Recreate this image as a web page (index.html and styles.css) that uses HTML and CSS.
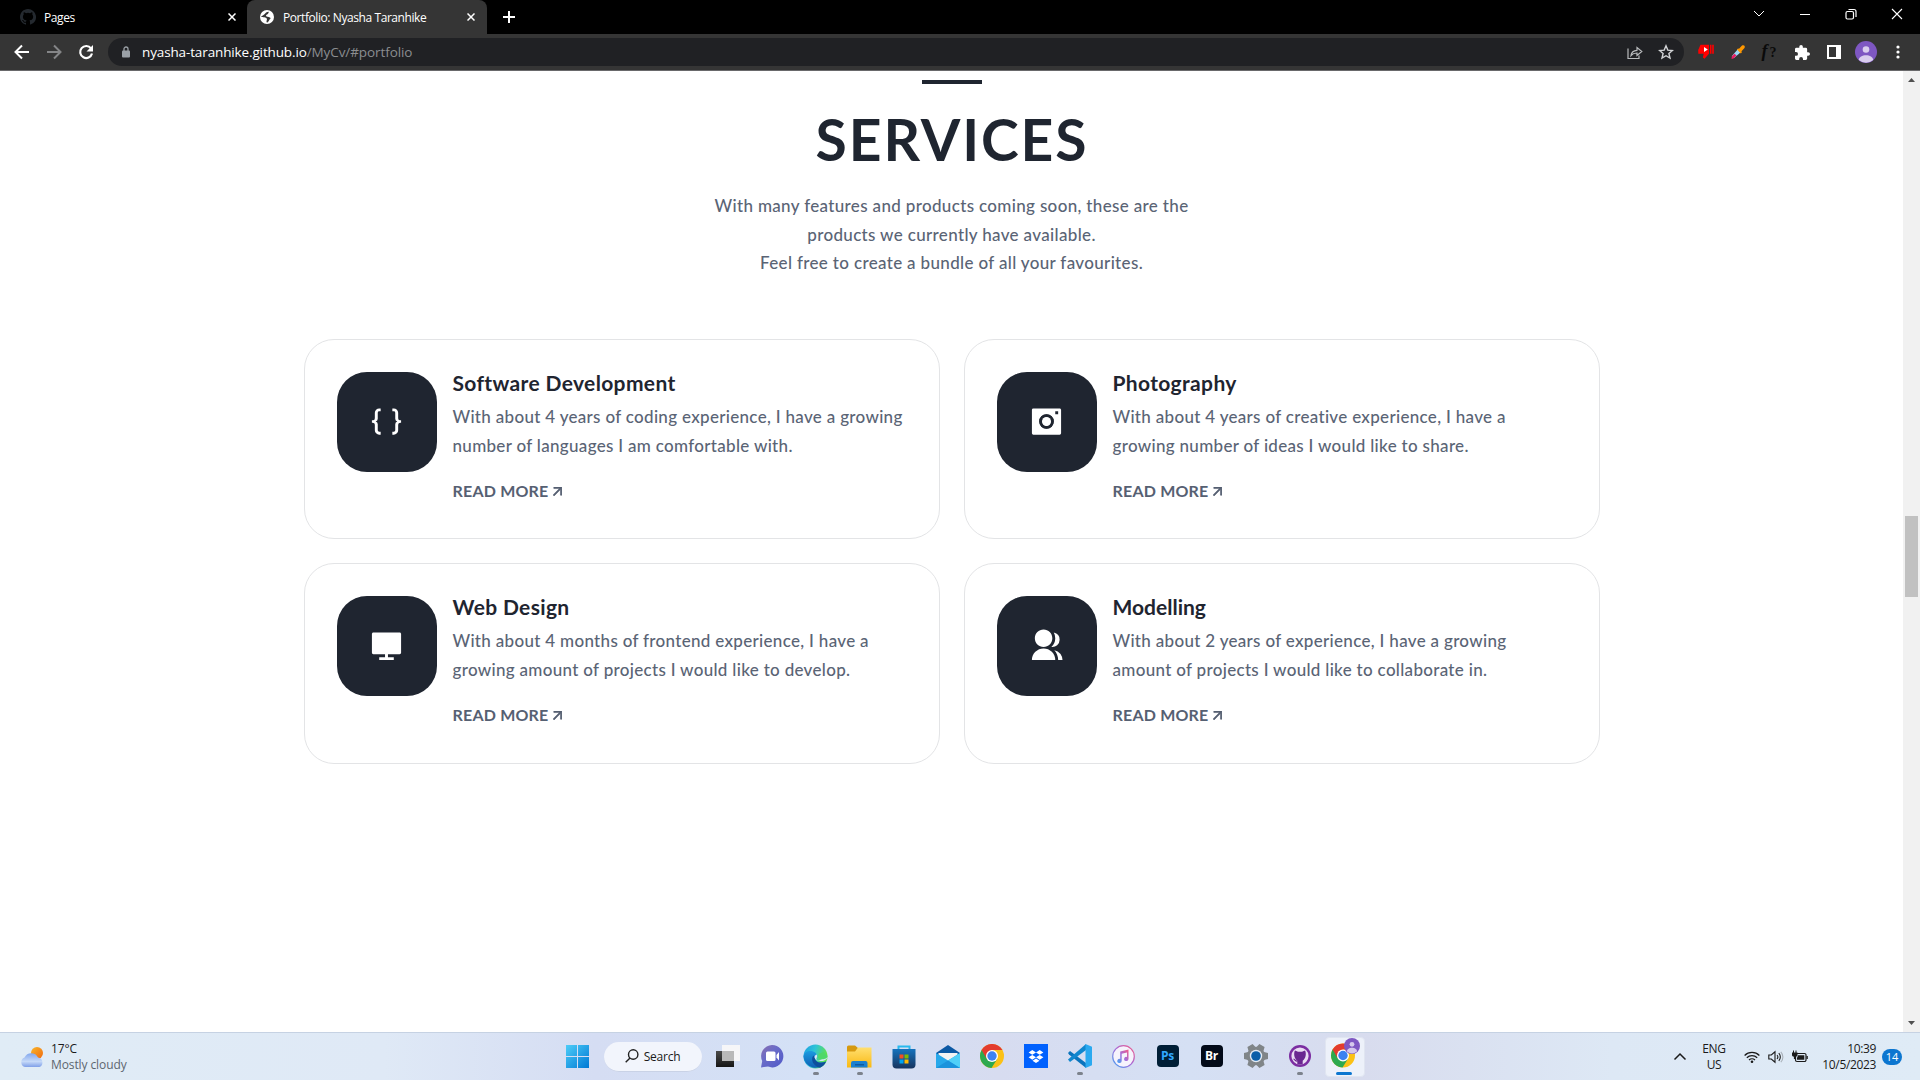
FILE: index.html
```html
<!DOCTYPE html>
<html lang="en">
<head>
<meta charset="utf-8">
<title>Portfolio: Nyasha Taranhike</title>
<link rel="stylesheet" href="styles.css">
</head>
<body>
<header class="tabs">
  <div class="tab">
    <svg class="fav" viewBox="0 0 16 16" fill="#24292f"><path d="M8 0C3.580 0 0 3.580 0 8c0 3.540 2.290 6.530 5.470 7.590.4.070.550-.170.550-.380v-1.490c-2.010.370-2.530-.490-2.690-.940-.090-.230-.480-.940-.820-1.130-.280-.150-.680-.520-.010-.530.630-.010 1.080.580 1.230.820.720 1.210 1.870.870 2.330.660.070-.520.280-.870.510-1.070-1.780-.2-3.640-.890-3.640-3.950 0-.870.310-1.590.820-2.150-.080-.2-.360-1.020.080-2.120 0 0 .670-.210 2.200.820a7.600 7.600 0 0 1 4 0c1.530-1.040 2.200-.820 2.200-.820.440 1.100.160 1.920.080 2.120.510.560.820 1.270.820 2.150 0 3.070-1.870 3.750-3.650 3.950.290.250.540.730.540 1.480v2.200c0 .210.150.460.550.380A8 8 0 0 0 8 0z"/></svg>
    <span class="tab-title">Pages</span>
    <svg class="x" viewBox="0 0 8 8" stroke="#fff" stroke-width="1.5"><path d="M.5.5l7 7M7.500.5l-7 7"/></svg>
  </div>
  <div class="tab active">
    <svg class="fav" viewBox="0 0 16 16"><circle cx="8" cy="8" r="7" fill="#fff"/><path d="M2 7.500c2 1.500 5 .3 5.800 2.200.6 1.500-1 2 .2 4 2.200-1 1.700-3 3.700-4.500C10 7.200 7.500 8.500 7 6.800c.4-1.700 2.700-1.200 2.700-4C6.500 2.500 6.500 6 2 7.500z" fill="#353535"/></svg>
    <span class="tab-title">Portfolio: Nyasha Taranhike</span>
    <svg class="x" viewBox="0 0 8 8" stroke="#fff" stroke-width="1.5"><path d="M.5.5l7 7M7.500.5l-7 7"/></svg>
  </div>
  <svg class="plus" viewBox="0 0 12 12" stroke="#fff" stroke-width="2"><path d="M6 0v12M0 6h12"/></svg>
  <div class="winctl">
    <svg width="12" height="12" viewBox="0 0 12 12" fill="none" stroke="#fff"><path d="M1 3l5 5 5-5"/></svg>
    <svg width="12" height="12" viewBox="0 0 12 12" stroke="#fff"><path d="M1 6.500h10"/></svg>
    <svg width="12" height="12" viewBox="0 0 12 12" fill="none" stroke="#fff" stroke-width="1.200"><rect x="1" y="3.500" width="7.500" height="7.500" rx="1.500"/><path d="M3.500 1.500h5.500a2 2 0 0 1 2 2V9"/></svg>
    <svg width="12" height="12" viewBox="0 0 12 12" stroke="#fff" stroke-width="1.100"><path d="M1 1l10 10M11 1L1 11"/></svg>
  </div>
</header>
<nav class="toolbar">
  <svg class="nav-ico" viewBox="0 0 16 16" fill="none" stroke="#fff" stroke-width="2"><path d="M15 8H2.500M8 1.500L1.500 8 8 14.500"/></svg>
  <svg class="nav-ico" viewBox="0 0 16 16" fill="none" stroke="#848587" stroke-width="2"><path d="M1 8h12.500M8 1.500L14.500 8 8 14.500"/></svg>
  <svg class="nav-ico" viewBox="0 0 16 16"><path d="M13 4.400A6 6 0 1 0 14 9.500" fill="none" stroke="#fff" stroke-width="2.200"/><path d="M15 1v6.500H8.500z" fill="#fff"/></svg>
  <div class="omnibox">
    <svg class="lock" viewBox="0 0 8 12"><path d="M2 5V3a2 2 0 0 1 4 0v2" fill="none" stroke="#9aa0a6" stroke-width="1.300"/><rect y="4.500" width="8" height="7" rx="1" fill="#9aa0a6"/></svg>
    <span class="url"><b>nyasha-taranhike.github.io</b>/MyCv/#portfolio</span>
    <svg class="share" viewBox="0 0 16 16" fill="none" stroke="#b9bbbd" stroke-width="1.200"><path d="M1 4.500v10h11v-3M4 11.500c.5-3.500 2.500-5 6-5.200V3.500L14.800 7.500 10 11.500V9C7.500 9 5.500 9.700 4 11.500z"/></svg>
    <svg class="star" viewBox="0 0 16 16" fill="none" stroke="#d2d4d6" stroke-width="1.400"><path d="M8 1.800l1.800 4.300 4.600.4-3.500 3 1.100 4.600L8 11.700l-4 2.400 1.100-4.600-3.500-3 4.600-.4z"/></svg>
  </div>
  <div class="exts">
    <svg width="16" height="16" viewBox="0 0 16 16"><path d="M2.500.8h8.500v9l-4.500 5-1.600-1.300.8-3.800H.3L.2 6z" fill="#f00"/><path d="M12 .8h1.500v9H12zM14.200.8h1.600v9h-1.600z" fill="#f00"/><path d="M6 3v5l3.800-2.500z" fill="#fff"/></svg>
    <svg width="16" height="16" viewBox="0 0 16 16"><path d="M8 5l3 3-7 6H2v-2z" fill="#9bd8f7"/><path d="M4.500 9.800l2 1.700-3 3L1.500 15l.3-2.500z" fill="#e91e63"/><path d="M8 4.500l1 .3L12 1.500c2-1 3.500.5 2.500 2.500l-3 3.300.3 1.200-1 1-3.800-4z" fill="#ff9800"/></svg>
    <span class="fq"><i>f</i>?</span>
    <svg width="15" height="15" viewBox="2 1 21 21"><path fill="#fff" d="M20.500 11H19V7a2 2 0 0 0-2-2h-4V3.500a2.500 2.500 0 0 0-5 0V5H4a2 2 0 0 0-2 2v3.800h1.500a2.700 2.700 0 0 1 0 5.400H2V20c0 1.100.9 2 2 2h3.800v-1.500a2.700 2.700 0 0 1 5.400 0V22H17a2 2 0 0 0 2-2v-4h1.500a2.500 2.500 0 0 0 0-5z"/></svg>
    <svg width="14" height="14" viewBox="0 0 14 14"><path fill="#fff" fill-rule="evenodd" d="M0 0h14v14H0zM2 2v10h7V2z"/></svg>
    <svg width="22" height="22" viewBox="0 0 22 22"><circle cx="11" cy="11" r="11" fill="#7e57c2"/><circle cx="11" cy="8.500" r="3.300" fill="#d9cdee"/><path d="M3.800 19c0-6.500 14.400-6.500 14.400 0a11 11 0 0 1-14.400 0z" fill="#d9cdee"/></svg>
    <svg width="4" height="14" viewBox="0 0 4 14" fill="#fff"><circle cx="2" cy="2" r="1.600"/><circle cx="2" cy="7" r="1.600"/><circle cx="2" cy="12" r="1.600"/></svg>
  </div>
</nav>
<div class="view">
  <main class="page">
    <div class="bar"></div>
    <h1>SERVICES</h1>
    <p class="lead">With many features and products coming soon, these are the<br>products we currently have available.<br>Feel free to create a bundle of all your favourites.</p>
    <section class="grid">
      <article class="card">
        <div class="tile"><svg viewBox="0 0 24 24"><path d="M4 18v-3.700a1.500 1.500 0 0 0-1.500-1.500H2v-1.600h.5A1.500 1.500 0 0 0 4 9.700V6a3 3 0 0 1 3-3h1v2H7a1 1 0 0 0-1 1v4.100A2 2 0 0 1 4.626 12 2 2 0 0 1 6 13.900V18a1 1 0 0 0 1 1h1v2H7a3 3 0 0 1-3-3zm16-3.700V18a3 3 0 0 1-3 3h-1v-2h1a1 1 0 0 0 1-1v-4.100a2 2 0 0 1 1.374-1.900A2 2 0 0 1 18 10.100V6a1 1 0 0 0-1-1h-1V3h1a3 3 0 0 1 3 3v3.700a1.500 1.500 0 0 0 1.500 1.500h.5v1.600h-.5a1.500 1.500 0 0 0-1.500 1.500z"/></svg></div>
        <div class="body"><h2>Software Development</h2><p>With about 4 years of coding experience, I have a growing<br>number of languages I am comfortable with.</p><a class="more">READ MORE<svg viewBox="5.900 5.900 12.200 12.200"><path d="M16.004 9.414l-8.607 8.607-1.414-1.414L14.589 8H7.004V6h11v11h-2V9.414z"/></svg></a></div>
      </article>
      <article class="card">
        <div class="tile"><svg viewBox="0 0 24 24"><path d="M2 3.993A1 1 0 0 1 2.992 3h18.016c.548 0 .992.445.992.993v16.014a1 1 0 0 1-.992.993H2.992A.993.993 0 0 1 2 20.007V3.993zM12 15a3 3 0 1 1 0-6 3 3 0 0 1 0 6zm0 2a5 5 0 1 0 0-10 5 5 0 0 0 0 10zm6-12v2h2V5h-2z" fill-rule="evenodd"/><circle cx="12" cy="12" r="4" fill="none" stroke="#1f2530" stroke-width="2"/><circle cx="12" cy="12" r="3.050" fill="#fff"/></svg></div>
        <div class="body"><h2>Photography</h2><p>With about 4 years of creative experience, I have a<br>growing number of ideas I would like to share.</p><a class="more">READ MORE<svg viewBox="5.900 5.900 12.200 12.200"><path d="M16.004 9.414l-8.607 8.607-1.414-1.414L14.589 8H7.004V6h11v11h-2V9.414z"/></svg></a></div>
      </article>
      <article class="card">
        <div class="tile"><svg viewBox="0 0 24 24"><path d="M13 18v2h4v2H7v-2h4v-2H2.992A.998.998 0 0 1 2 16.993V4.007C2 3.451 2.455 3 2.992 3h18.016c.548 0 .992.449.992 1.007v12.986c0 .556-.455 1.007-.992 1.007H13z"/></svg></div>
        <div class="body"><h2>Web Design</h2><p>With about 4 months of frontend experience, I have a<br>growing amount of projects I would like to develop.</p><a class="more">READ MORE<svg viewBox="5.900 5.900 12.200 12.200"><path d="M16.004 9.414l-8.607 8.607-1.414-1.414L14.589 8H7.004V6h11v11h-2V9.414z"/></svg></a></div>
      </article>
      <article class="card">
        <div class="tile"><svg viewBox="0 0 24 24"><path d="M2 22a8 8 0 1 1 16 0H2zm8-9c-3.315 0-6-2.685-6-6s2.685-6 6-6 6 2.685 6 6-2.685 6-6 6zm7.363 2.233A7.505 7.505 0 0 1 22.983 22H20c0-2.610-1-4.986-2.637-6.767zm-2.023-2.276A7.980 7.980 0 0 0 18 7a7.964 7.964 0 0 0-1.015-3.903A5 5 0 0 1 21 8a4.999 4.999 0 0 1-5.660 4.957z"/></svg></div>
        <div class="body"><h2 class="tight">Modelling</h2><p>With about 2 years of experience, I have a growing<br>amount of projects I would like to collaborate in.</p><a class="more">READ MORE<svg viewBox="5.900 5.900 12.200 12.200"><path d="M16.004 9.414l-8.607 8.607-1.414-1.414L14.589 8H7.004V6h11v11h-2V9.414z"/></svg></a></div>
      </article>
    </section>
  </main>
  <div class="scroll">
    <svg width="7" height="4" viewBox="0 0 7 4"><path d="M0 4L3.500 0 7 4z" fill="#505050"/></svg>
    <b class="thumb"></b>
    <svg width="7" height="4" viewBox="0 0 7 4"><path d="M0 0l3.500 4L7 0z" fill="#505050"/></svg>
  </div>
</div>
<footer class="taskbar">
  <div class="weather">
    <svg width="24" height="22" viewBox="0 0 24 22"><defs><linearGradient id="sun" x1="0" y1="0" x2="1" y2="1"><stop offset="0" stop-color="#f9b62a"/><stop offset="1" stop-color="#f0690f"/></linearGradient><linearGradient id="cl" x1="0" y1="0" x2="0" y2="1"><stop offset="0" stop-color="#84a8ee"/><stop offset=".6" stop-color="#c5d9f8"/><stop offset="1" stop-color="#7f9fe8"/></linearGradient></defs><circle cx="17" cy="7" r="6" fill="url(#sun)"/><path d="M5 21a5 5 0 0 1-.5-9.500A7.500 7.500 0 0 1 18 11.500 5 5 0 0 1 19.500 21z" fill="url(#cl)"/></svg>
    <div class="wtext"><span>17°C</span><span class="sub">Mostly cloudy</span></div>
  </div>
  <div class="apps">
    <div class="app"><svg width="23" height="23" viewBox="0 0 23 23"><defs><linearGradient id="win" x1="0" y1="0" x2="1" y2="1"><stop offset="0" stop-color="#4dcdf8"/><stop offset="1" stop-color="#0078d4"/></linearGradient></defs><path d="M0 0h11v11H0zM12 0h11v11H12zM0 12h11v11H0zM12 12h11v11H12z" fill="url(#win)"/></svg></div>
    <div class="search"><svg width="14" height="14" viewBox="0 0 14 14" fill="none" stroke="#222" stroke-width="1.400"><circle cx="8.200" cy="5.500" r="4.700"/><path d="M5 9L.7 13.300"/></svg><span>Search</span></div>
    <div class="app"><svg width="24" height="24" viewBox="0 0 24 24"><defs><linearGradient id="tv" x1="0" y1="0" x2="0" y2="1"><stop offset="0" stop-color="#4a4a4a"/><stop offset="1" stop-color="#161616"/></linearGradient></defs><path d="M0 7h18v16H0z" fill="url(#tv)"/><path d="M6 1h18v16H6z" fill="#f6f6f8"/><path d="M6 7h12v10H6z" fill="#b9b9b9"/></svg></div>
    <div class="app"><svg width="24" height="24" viewBox="0 0 24 24"><defs><linearGradient id="ch" x1="0" y1="0" x2="1" y2="1"><stop offset="0" stop-color="#8b6fb0"/><stop offset=".4" stop-color="#6a6cc8"/><stop offset="1" stop-color="#5059c9"/></linearGradient></defs><path d="M12 1a11.200 11.200 0 1 1-4 21.600L1 23.500 2.200 17A11.200 11.200 0 0 1 12 1z" fill="url(#ch)"/><rect x="6" y="7.500" width="9.500" height="9.500" rx="1.500" fill="#fff"/><path d="M16.500 11L19 8v8.500l-2.500-3z" fill="#fff"/></svg></div>
    <div class="app run"><svg width="25" height="25" viewBox="0 0 25 25"><defs><linearGradient id="e1" x1="0" y1="0" x2="1" y2=".3"><stop offset="0" stop-color="#1b9de2"/><stop offset=".5" stop-color="#2fc4d6"/><stop offset="1" stop-color="#62e34a"/></linearGradient><linearGradient id="e2" x1="0" y1="0" x2="0" y2="1"><stop offset="0" stop-color="#1c9be0"/><stop offset="1" stop-color="#0f5fb4"/></linearGradient></defs><circle cx="12.500" cy="12.500" r="12" fill="url(#e1)"/><path d="M.5 12.500C1 8 6 6 10 7.500c3.500 1.200 4 3.500 3.500 4.500l-2 1.500c-.5 4 5 6.500 11.500 4A12 12 0 0 1 .5 12.500z" fill="url(#e2)"/><path d="M10.500 11.500c-3.500 4 0 11 6.500 12.200 3-1.200 5-3.400 6-6.200-5.500 2.500-10.500 1-11-3z" fill="#0d4e9c"/><path d="M13.500 10.500c-1.800.7-2.200 2-1.800 3.500.9 3 6 3.600 9.500 2.500 2-.7 3.300-2 3.300-4l-8.500 4c-1.500 0-3.200-.8-2.500-2.500.8-1 .8-2.500 0-3.500z" fill="#d9e6f8"/><path d="M15 13.500c0 2.200 9.500 3 9.500-1.500l-4-4-5 2z" fill="#4fd86a"/></svg></div>
    <div class="app run"><svg width="25" height="23" viewBox="0 0 25 23"><defs><linearGradient id="fo" x1="0" y1="0" x2="0" y2="1"><stop offset="0" stop-color="#ffdf70"/><stop offset="1" stop-color="#f9b913"/></linearGradient></defs><path d="M0 2a1.500 1.500 0 0 1 1.500-1.500H8L11 3v4H0z" fill="#d6990f"/><path d="M0 6.500h8l3-4h13.500v20H0z" fill="url(#fo)"/><path d="M4 22.500V18a2 2 0 0 1 2-2h12.500a2 2 0 0 1 2 2v4.500z" fill="#1a80cf"/><path d="M8 19h9v1.500H8z" fill="#0d5ba1"/></svg></div>
    <div class="app"><svg width="24" height="25" viewBox="0 0 24 25"><defs><linearGradient id="st" x1="0" y1="0" x2="0" y2="1"><stop offset="0" stop-color="#1673bd"/><stop offset="1" stop-color="#17345e"/></linearGradient></defs><path d="M6.500 6V2.500h11V6" fill="none" stroke="#28b9ee" stroke-width="2"/><path d="M.5 5h23v15.500a4 4 0 0 1-4 4h-15a4 4 0 0 1-4-4z" fill="url(#st)"/><path d="M7.500 10.500h4v4h-4z" fill="#f25022"/><path d="M12.500 10.500h4v4h-4z" fill="#7fba00"/><path d="M7.500 15.500h4v4h-4z" fill="#00a4ef"/><path d="M12.500 15.500h4v4h-4z" fill="#ffb900"/></svg></div>
    <div class="app"><svg width="24" height="23" viewBox="0 0 24 23"><path d="M0 8l12-8 12 8v6H0z" fill="#0c59a4"/><path d="M2.500 8h19v9h-19z" fill="#f3f3f3"/><path d="M0 8l12 7.500L24 8v15H0z" fill="#27a8ea"/><path d="M24 8v15L12 15.500z" fill="#50d0f8"/><path d="M0 23l12-7.500L24 23z" fill="#1b93dc"/></svg></div>
    <div class="app"><svg width="24" height="24" viewBox="0 0 24 24"><g id="chrome"><circle cx="12" cy="12" r="12" fill="#fbc116"/><path d="M12 12L1.600 6A12 12 0 0 0 11.500 24L17.200 15z" fill="#2da94f"/><path d="M1.600 6a12 12 0 0 1 20.800 0H12L6.800 15z" fill="#e33b2e"/><circle cx="12" cy="12" r="6" fill="#fff"/><circle cx="12" cy="12" r="4.700" fill="#3d82f0"/></g></svg></div>
    <div class="app"><svg width="24" height="24" viewBox="0 0 24 24"><path d="M0 0h24v24H0z" fill="#0061fe"/><path d="M8.300 6l3.700 2.400-3.700 2.400-3.700-2.400zM15.700 6l3.700 2.400-3.700 2.400L12 8.400zM8.300 10.900l3.700 2.400-3.700 2.400-3.700-2.400zM15.700 10.900l3.700 2.400-3.700 2.400L12 13.300zM12 14.500l3.500 2.200L12 19l-3.500-2.300z" fill="#fff"/></svg></div>
    <div class="app run"><svg width="24" height="24" viewBox="0 0 24 24"><path d="M0 9l2-2 16 12v5L1 10.500z" fill="#0a74bd"/><path d="M0 15.500L18 0v6L2 18z" fill="#1087cf"/><path d="M17.500 0L24 2.800v18.400L17.500 24z" fill="#2aa9f0"/></svg></div>
    <div class="app"><svg width="23" height="23" viewBox="0 0 23 23"><defs><linearGradient id="it" x1="1" y1="0" x2="0" y2="1"><stop offset="0" stop-color="#f55a86"/><stop offset=".5" stop-color="#a66bd8"/><stop offset="1" stop-color="#45a5f2"/></linearGradient></defs><circle cx="11.500" cy="11.500" r="10.800" fill="#f6f3fc" stroke="url(#it)" stroke-width="1.200"/><path d="M8.200 6.500L16.500 4.500V14a2.200 2 0 1 1-1.500-2V7.500L9.700 8.800V16a2.200 2 0 1 1-1.500-2z" fill="url(#it)"/></svg></div>
    <div class="app"><span class="adobe ps">Ps</span></div>
    <div class="app"><span class="adobe">Br</span></div>
    <div class="app"><svg width="24" height="24" viewBox="0 0 24 24"><g fill="#808588"><circle cx="12" cy="12" r="9.200"/><path id="tooth" d="M9 0h6l1 4H8zM9 24h6l1-4H8z" transform="rotate(30 12 12)"/><use href="#tooth" transform="rotate(60 12 12)"/><use href="#tooth" transform="rotate(120 12 12)"/></g><circle cx="12" cy="12" r="6.200" fill="#e2eaf4"/><circle cx="12" cy="12" r="4.800" fill="#0a5ea8"/></svg></div>
    <div class="app run"><svg width="22" height="22" viewBox="0 0 22 22"><circle cx="11" cy="11" r="11" fill="#7b2da1"/><circle cx="11" cy="11" r="8.600" fill="#e9dcf2"/><path d="M8.300 19v-3.300C5 13.700 4.500 8 6 5.500l3 1.300h4l3-1.300c1.500 2.500 1 8.200-2.300 10.200V19a9 9 0 0 1-5.400 0z" fill="#6a2790"/><path d="M4.500 14c1.300 0 1.500 2.500 4 2.200" fill="none" stroke="#6a2790" stroke-width="1.200"/></svg></div>
    <div class="app current"><svg width="30" height="30" viewBox="0 0 30 30"><use href="#chrome" x="1" y="5.500"/><circle cx="22" cy="8" r="8" fill="#7e57c2"/><circle cx="22" cy="6.300" r="2.400" fill="#d5c8ec"/><path d="M17 13.500c0-5 10-5 10 0a8 8 0 0 1-10 0z" fill="#d5c8ec"/></svg></div>
  </div>
  <div class="tray">
    <svg class="chev" width="14" height="14" viewBox="0 0 14 14" fill="none" stroke="#1a1a1a" stroke-width="1.500"><path d="M1.500 9.500L7 4 12.500 9.500"/></svg>
    <div class="lang"><span>ENG</span><span>US</span></div>
    <svg class="wifi" width="16" height="14" viewBox="0 0 16 14" fill="none" stroke="#1a1a1a" stroke-width="1.200"><path d="M.6 5.500a10.400 10.400 0 0 1 14.800 0M2.800 7.800a7.400 7.400 0 0 1 10.400 0M5 10a4.300 4.300 0 0 1 6 0"/><circle cx="8" cy="11.800" r="1.300" fill="#1a1a1a" stroke="none"/></svg>
    <svg class="vol" width="16" height="14" viewBox="0 0 16 14" fill="none" stroke="#1a1a1a" stroke-width="1.100"><path d="M.8 5h2.500L7 1.800v10.400L3.300 9H.8zM9 5a3 3 0 0 1 0 4M10.800 3.200a5.500 5.500 0 0 1 0 7.600"/><path d="M12.800 1.800a7.500 7.500 0 0 1 0 10.400" stroke="#a9b0b8"/></svg>
    <svg class="batt" width="16" height="14" viewBox="0 0 16 14"><path d="M5 3.500h7.500a1.500 1.500 0 0 1 1.500 1.500v5a1.500 1.500 0 0 1-1.500 1.500H5A1.500 1.500 0 0 1 3.500 10V5" fill="none" stroke="#1a1a1a" stroke-width="1.200"/><path d="M6 5.200h6.300v4.600H5V8zM14.500 6h1.300v3h-1.300zM0 2.500h1V.5h1v2h1.500v-2h1v2h1V5c0 1-.8 1.500-1.800 1.700V9H1.900V6.700C.8 6.500 0 6 0 5z" fill="#1a1a1a"/></svg>
    <div class="clock"><span>10:39</span><span>10/5/2023</span></div>
    <span class="badge">14</span>
  </div>
</footer>
</body>
</html>
```
FILE: styles.css
```css
*{box-sizing:border-box}
body{margin:0;height:1080px;overflow:hidden;display:flex;flex-direction:column;background:#fff;font-family:"Open Sans","Noto Sans",sans-serif}
svg{display:block;flex:none}

/* browser tabs */
.tabs{height:34px;background:#000;display:flex;align-items:center;flex:none}
.tab{display:flex;align-items:center;height:34px;color:#fff;font-size:12px;letter-spacing:-.42px;width:247px;padding:0 11px 0 20px}
.active{background:#353535;width:240px;border-radius:8px 8px 0 0;padding:0 12px}
.fav{width:16px;height:16px}
.x{width:8px;height:8px;margin-left:auto}
.tab-title{margin-left:8px;white-space:nowrap}
.plus{width:12px;height:12px;margin-left:16px}
.winctl{margin-left:auto;display:flex;gap:34px;padding:0 17px 6px 0}

/* address bar */
.toolbar{height:37px;background:#353535;border-bottom:1px solid #69696b;display:flex;align-items:center;flex:none;padding-left:14px}
.nav-ico{width:16px;height:16px;margin-right:16px}
.omnibox{flex:1;background:#202124;height:28px;border-radius:14px;display:flex;align-items:center;margin-left:-2px}
.lock{width:8px;height:12px;margin-left:14px}
.url{font-size:13.5px;letter-spacing:-.09px;color:#8b8d90;margin-left:12px}
.url b{font-weight:400;color:#fff;letter-spacing:-.13px}
.share{width:16px;height:16px;margin-left:auto}
.star{width:16px;height:16px;margin:0 10px 0 15px}
.exts{display:grid;grid-template-columns:repeat(7,32px);place-items:center;padding:0 6px}
.fq{font:700 14px/16px "Liberation Serif",serif;color:#0a0a0a;letter-spacing:2px}
.fq i{font-size:18px}

/* page */
.view{flex:1;display:flex;min-height:0}
.page{flex:1;font-family:Lato,sans-serif;background:#fff}
.bar{width:60px;height:4px;background:#1f2530;margin:9px auto 0}
h1{margin:18.5px 0 17.5px;padding-left:1px;text-align:center;font-size:57px;line-height:72px;letter-spacing:1.9px;color:#1f2530;font-weight:700}
.lead{text-align:center;font-size:17px;letter-spacing:.34px;line-height:28.5px;color:#5a6475;margin:0;font-weight:500}
.grid{display:grid;grid-template-columns:636px 636px;gap:24px;justify-content:center;margin-top:61.5px}
.card{height:200.4px;border:1px solid #e3e4e6;border-radius:30px;padding:32px;display:flex;gap:16px}
.tile{width:100px;height:100px;border-radius:30px;background:#1f2530;display:flex;align-items:center;justify-content:center;padding-bottom:1px;flex:none}
.tile svg{width:35px;height:35px;fill:#fff}
h2{font-size:21px;line-height:21px;letter-spacing:.35px;margin:0 0 10px;font-weight:700;color:#1f2530}
.tight{letter-spacing:0}
.body p{margin:0 0 20px;font-size:17px;line-height:28.8px;letter-spacing:.31px;color:#5a6475;font-weight:500;white-space:nowrap}
.more{display:flex;align-items:center;gap:4px;font-weight:700;font-size:16px;line-height:20px;letter-spacing:.2px;color:#566072}
.more svg{width:9px;height:9px;fill:#566072;stroke:#566072;stroke-width:.8;margin-top:2px}

/* scrollbar */
.scroll{width:17px;background:#f1f1f1;display:flex;flex-direction:column;align-items:center;padding:7px 0}
.thumb{width:13px;height:81px;background:#c1c1c1;margin:434px 0 auto}

/* taskbar */
.taskbar{height:48px;flex:none;border-top:1px solid #c6d2e3;background:linear-gradient(90deg,#e0ecf6 0,#dfe9f6 20%,#d5ddf3 31%,#d4e1f6 42%,#d7dcf0 52%,#d5e0f4 62%,#d8dcee 71%,#dde8f5 84%,#dfebf6 100%);display:flex;font-size:12px;color:#1a1a1a}
.weather{width:555.5px;display:flex;align-items:center;padding-left:20px;gap:7px}
.wtext,.lang,.clock{display:flex;flex-direction:column;line-height:16px}
.wtext{letter-spacing:-.1px}
.sub{color:#5d6670}
.apps{display:flex;align-items:center}
.app{width:44px;height:47px;display:flex;align-items:center;justify-content:center;position:relative;padding-bottom:1px}
.run::after,.current::after{content:"";position:absolute;bottom:5px;left:19px;width:6px;height:3px;border-radius:2px;background:#7c828c}
.current::after{left:14px;width:16px;background:#0c76d0}
.current::before{content:"";position:absolute;left:3px;top:4px;width:38px;height:38px;border-radius:4px;background:#edf1fa;border:1px solid #e0e5f1}
.current svg{position:relative;margin:-6px 0 0 3px}
.search{width:98px;height:30px;margin:0 4px;border-radius:15px;background:#f2f5fc;border-bottom:1px solid #c9d2e6;display:flex;align-items:center;justify-content:center;gap:5px;letter-spacing:-.25px}
.adobe{width:22px;height:22px;border-radius:4px;background:#020a18;color:#fff;font:700 12px/21px "Open Sans",sans-serif;text-align:center;letter-spacing:-.3px}
.ps{background:#001e36;color:#31a8ff}
.tray{margin-left:auto;display:flex;align-items:center;padding-right:18px}
.chev{margin-right:12px}
.lang{text-align:center;width:30px;margin-right:15px;letter-spacing:-.3px}
.wifi{margin-right:8px}
.vol{margin-right:8px}
.clock{text-align:right;width:68px;letter-spacing:-.35px}
.badge{width:20px;height:16px;border-radius:8px;background:#0c76d0;color:#fff;font-size:11px;line-height:16px;text-align:center;margin-left:6px}
```
